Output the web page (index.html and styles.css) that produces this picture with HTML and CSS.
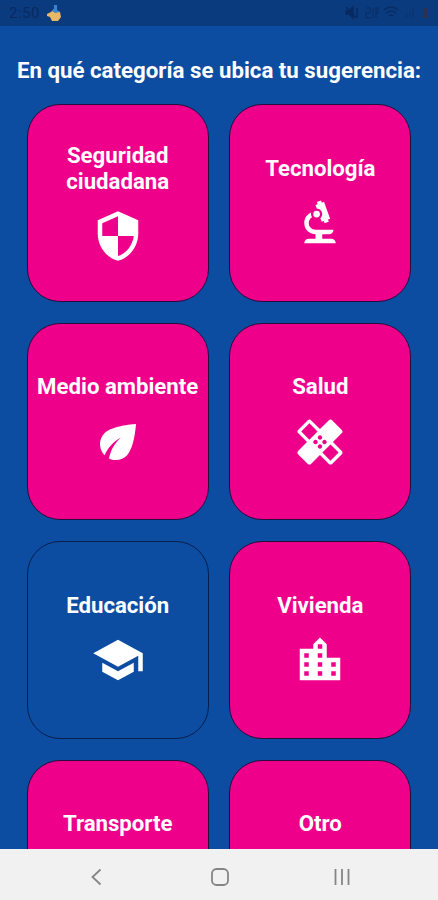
FILE: index.html
```html
<!DOCTYPE html>
<html lang="es">
<head>
<meta charset="utf-8">
<title>Categoría de la sugerencia</title>
<link rel="stylesheet" href="styles.css">
</head>
<body>
<div class="screen">
  <header class="status">
    <span class="clock">2:50</span>
    <svg class="hand" viewBox="0 0 16 18"><path d="M1 10 5 8l3-3 6 3 1 5-3 4H6L4 13l-3-1z" fill="#e9b866"/><path d="M8 1h3v5l3 2-5 1-3-2 2-2z" fill="#3685d4"/></svg>
    <svg class="indicators" viewBox="0 0 90 16">
      <g fill="none" stroke="#092a60" stroke-width="1.5">
        <path d="M3 6h3l4-4v11l-4-4H3zM14 3v10M3 2l10 11" fill="#092a60"/>
        <path d="M23 3h4v5h-4v5h5M30 3v10M33 13V3h2v5h-2" opacity=".6"/>
        <path d="M41 5q7-6 14 0M43 8q5-4 10 0M46 11q2-2 4 0" opacity=".8"/>
        <path d="M61 13v-2M64 13V9M67 13V6M70 13V3" opacity=".35"/>
      </g>
      <path d="M80 3h5v10h-5z" fill="#28334f"/>
    </svg>
  </header>
  <main class="content">
    <h1 class="heading">En qué categoría se ubica tu sugerencia:</h1>
    <div class="grid">
      <button class="card"><span class="label">Seguridad ciudadana</span>
        <svg class="icon" viewBox="0 0 24 24"><path d="M12 1L3 5v6c0 5.55 3.84 10.74 9 12 5.16-1.26 9-6.45 9-12V5l-9-4zm0 10.99h7c-.53 4.12-3.28 7.79-7 8.94V12H5V6.3l7-3.11v8.8z"/></svg></button>
      <button class="card"><span class="label">Tecnología</span>
        <svg class="icon" viewBox="0 0 24 24"><path d="M7 19c-1.1 0-2 .9-2 2h14c0-1.1-.9-2-2-2h-4v-2h3c1.1 0 2-.9 2-2h-8c-1.66 0-3-1.34-3-3 0-1.09.59-2.04 1.46-2.56C8.17 9.03 8 8.54 8 8c0-.21.04-.42.09-.62C6.28 8.13 5 9.92 5 12c0 2.76 2.24 5 5 5v2H7z"/><path d="M10.56 5.51C11.91 5.54 13 6.64 13 8c0 .75-.33 1.41-.85 1.87l.59 1.62.94-.34.34.94 1.88-.68-.34-.94.94-.34-2.74-7.52-.94.34-.34-.94-1.88.68.34.94-.94.35.56 1.53z"/><circle cx="10.5" cy="8" r="1.5"/></svg></button>
      <button class="card"><span class="label">Medio ambiente</span>
        <svg class="icon" viewBox="0 0 24 24"><path d="M6.05 8.05c-2.73 2.73-2.73 7.15-.02 9.88 1.47-3.4 4.09-6.24 7.36-7.93-2.77 2.34-4.71 5.61-5.39 9.32 2.6 1.23 5.8.78 7.95-1.37C19.43 14.47 20 4 20 4S9.53 4.57 6.05 8.05z"/></svg></button>
      <button class="card"><span class="label">Salud</span>
        <svg class="icon" viewBox="0 0 24 24"><path d="M17.73 12.02l3.98-3.98c.39-.39.39-1.02 0-1.41l-4.34-4.34c-.39-.39-1.02-.39-1.41 0l-3.98 3.98L8 2.29C7.8 2.1 7.55 2 7.29 2c-.25 0-.51.1-.7.29L2.25 6.63c-.39.39-.39 1.02 0 1.41l3.98 3.98L2.25 16c-.39.39-.39 1.02 0 1.41l4.34 4.34c.39.39 1.02.39 1.41 0l3.98-3.98 3.98 3.98c.2.2.45.29.71.29.26 0 .51-.1.71-.29l4.34-4.34c.39-.39.39-1.02 0-1.41l-3.99-3.98zM12 9c.55 0 1 .45 1 1s-.45 1-1 1-1-.45-1-1 .45-1 1-1zm-4.71 1.96L3.66 7.34l3.63-3.63 3.62 3.62-3.62 3.63zM10 13c-.55 0-1-.45-1-1s.45-1 1-1 1 .45 1 1-.45 1-1 1zm2 2c-.55 0-1-.45-1-1s.45-1 1-1 1 .45 1 1-.45 1-1 1zm2-4c.55 0 1 .45 1 1s-.45 1-1 1-1-.45-1-1 .45-1 1-1zm2.66 9.34l-3.63-3.62 3.63-3.63 3.62 3.62-3.62 3.63z"/></svg></button>
      <button class="card selected"><span class="label">Educación</span>
        <svg class="icon" viewBox="0 0 24 24"><path d="M5 13.18v4L12 21l7-3.82v-4L12 17l-7-3.82zM12 3L1 9l11 6 9-4.91V17h2V9L12 3z"/></svg></button>
      <button class="card"><span class="label">Vivienda</span>
        <svg class="icon" viewBox="0 0 24 24"><path d="M15 11V5l-3-3-3 3v2H3v14h18V11h-6zm-8 8H5v-2h2v2zm0-4H5v-2h2v2zm0-4H5V9h2v2zm6 8h-2v-2h2v2zm0-4h-2v-2h2v2zm0-4h-2V9h2v2zm0-4h-2V5h2v2zm6 12h-2v-2h2v2zm0-4h-2v-2h2v2z"/></svg></button>
      <button class="card"><span class="label">Transporte</span><span class="icon"></span></button>
      <button class="card"><span class="label">Otro</span><span class="icon"></span></button>
    </div>
  </main>
  <nav class="navbar">
    <svg viewBox="0 0 20 20"><path d="M13.5 2.5 5.5 10l8 7.5"/></svg>
    <svg viewBox="0 0 20 20"><rect x="2" y="2" width="16" height="16" rx="4.5"/></svg>
    <svg viewBox="0 0 20 20"><path d="M3.5 2v16M10 2v16M16.5 2v16"/></svg>
  </nav>
</div>
</body>
</html>
```
FILE: styles.css
```css
* { box-sizing: border-box; }
body { margin: 0; font-family: Roboto, sans-serif; }
.screen {
  display: flex;
  flex-direction: column;
  width: 438px;
  height: 900px;
  overflow: hidden;
  background: #0c4da2;
}
.status {
  display: flex;
  align-items: center;
  flex: none;
  height: 26px;
  padding: 0 5px 0 9px;
  background: #0a3b7e;
}
.clock { font-size: 15px; letter-spacing: .5px; color: #092a60; }
.hand { width: 16px; height: 18px; margin-left: 6px; }
.indicators { width: 90px; height: 16px; margin-left: auto; }
.content { flex: 1; min-height: 0; overflow: hidden; }
.heading {
  margin: 31px 0 21.4px;
  font-size: 22.25px;
  font-weight: 700;
  line-height: 26px;
  text-align: center;
  white-space: nowrap;
  color: #fff;
}
.grid {
  display: grid;
  grid-template-columns: 182px 182px;
  grid-auto-rows: 197.5px;
  gap: 20.9px 20.6px;
  justify-content: center;
}
.card {
  display: flex;
  flex-direction: column;
  align-items: center;
  justify-content: center;
  gap: 15px;
  padding: 0;
  border: 1.5px solid #240d3d;
  border-radius: 33px;
  background: #ee008b;
  font: 700 22.2px/25.7px Roboto, sans-serif;
  color: #fff;
}
.label { max-width: 166px; }
.card.selected { background: #0c4da2; border-color: #061f4c; }
.icon { flex: none; width: 54px; height: 54px; fill: currentColor; }
.navbar {
  display: flex;
  align-items: center;
  justify-content: space-between;
  flex: none;
  height: 51px;
  padding: 4px 86px 0 87px;
  background: #f1f1f1;
}
.navbar svg { width: 20px; height: 20px; fill: none; stroke: #858585; stroke-width: 1.8; }
```
